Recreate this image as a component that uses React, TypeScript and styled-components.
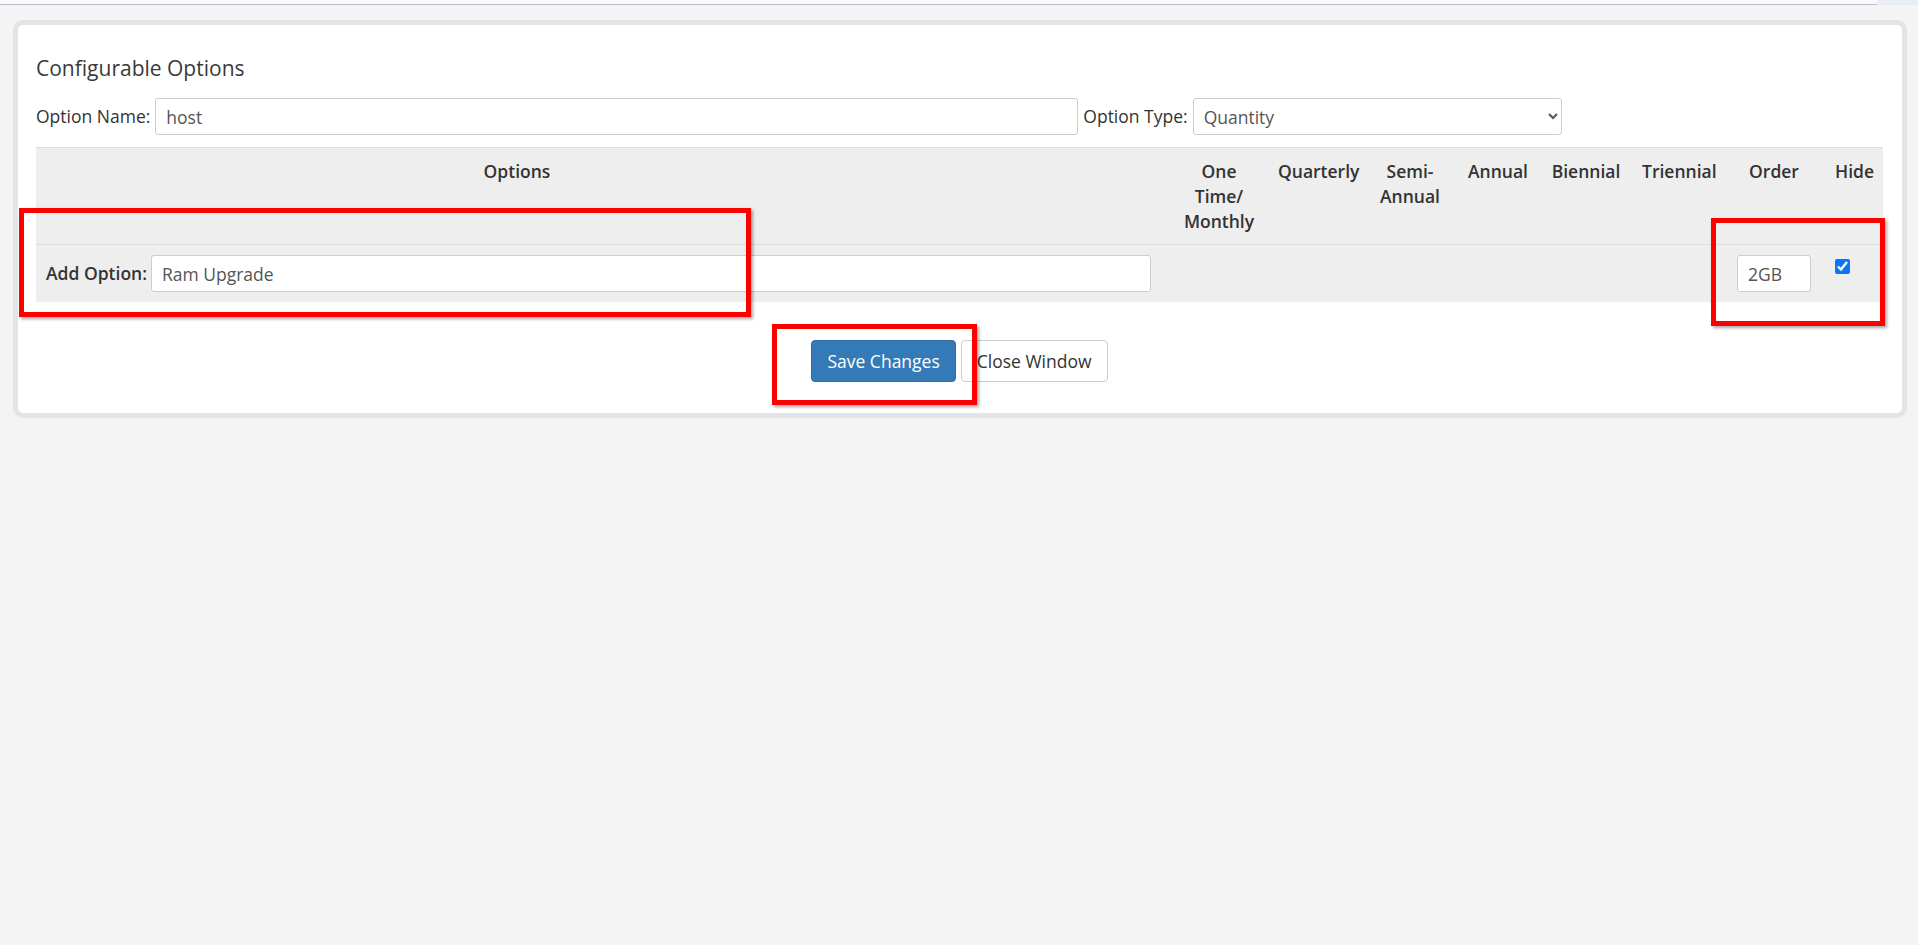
import styled, { createGlobalStyle } from 'styled-components'

const GlobalStyle = createGlobalStyle`
  html, body {
    margin: 0;
    padding: 0;
    background: #f4f4f4;
    font-family: 'Open Sans', 'Liberation Sans', sans-serif;
    font-size: 17.5px;
    line-height: 25px;
    color: #333;
  }
`

const COLS = '962px 172px 98px 96px 92px 84px 92px 91px 102px 58px'

const TopStrip = styled.div`
  display: flex;
  height: 5px;
`
const StripLine = styled.div`
  flex: 0 0 1877px;
  background: #f8f8fa;
  border-bottom: 1px solid #b9bdc8;
  box-sizing: border-box;
`
const StripEnd = styled.div`
  flex: 1;
  background: #e7ecf6;
`

const Page = styled.div`
  position: relative;
  min-height: 940px;
`
const Wrap = styled.div`
  padding: 15px 11px 0 13px;
`
const Panel = styled.div`
  background: #fff;
  border: 5px solid #e1e5e8;
  border-radius: 10px;
  padding: 18px 19px 31px 18px;
`
const Title = styled.h2`
  margin: 11px 0 16px;
  font-size: 21px;
  line-height: 28px;
  font-weight: 400;
  color: #3a3a3a;
`
const FormRow = styled.div`
  display: flex;
  align-items: center;
  gap: 5px;
  height: 37px;
`
const Label = styled.label<{ $bold?: boolean }>`
  white-space: nowrap;
  font-weight: ${p => (p.$bold ? 600 : 400)};
  color: #333;
`
const TextInput = styled.input<{ $w: number }>`
  box-sizing: border-box;
  width: ${p => p.$w}px;
  height: 37px;
  padding: 0 10px;
  border: 1px solid #ccc;
  border-radius: 3px;
  background: #fff;
  font-family: inherit;
  font-size: 17.5px;
  color: #555;
  outline: none;
`
const Select = styled.select`
  box-sizing: border-box;
  width: 369px;
  height: 37px;
  padding: 0 6px;
  border: 1px solid #ccc;
  border-radius: 3px;
  background: #fff;
  font-family: inherit;
  font-size: 17.5px;
  color: #555;
`

const Table = styled.div`
  margin-top: 12px;
  border-top: 1px solid #ddd;
  background: #eee;
`
const Row = styled.div<{ $head?: boolean }>`
  display: grid;
  grid-template-columns: ${COLS};
  border-bottom: ${p => (p.$head ? '1px solid #ddd' : 'none')};
`
const HeadCell = styled.div`
  padding: 11px 10px 10px;
  text-align: center;
  font-weight: 600;
  white-space: nowrap;
  color: #333;
`
const Cell = styled.div<{ $span?: number; $center?: boolean }>`
  grid-column: span ${p => p.$span ?? 1};
  padding: 10px;
  display: flex;
  align-items: ${p => (p.$center ? 'center' : 'flex-start')};
  justify-content: ${p => (p.$center ? 'center' : 'flex-start')};
  gap: 4px;
  min-height: 37px;
`
const AddCell = styled(Cell)`
  align-items: center;
`
const Check = styled.input`
  width: 15px;
  height: 15px;
  margin: 4px 0 0 0;
  accent-color: #0b75f5;
`

const Buttons = styled.div`
  display: flex;
  justify-content: center;
  gap: 5px;
  margin-top: 38px;
`
const Button = styled.button<{ $primary?: boolean }>`
  box-sizing: border-box;
  height: 42px;
  padding: 0 15px;
  border-radius: 4px;
  border: 1px solid ${p => (p.$primary ? '#2e6da4' : '#ccc')};
  background: ${p => (p.$primary ? '#337ab7' : '#fff')};
  color: ${p => (p.$primary ? '#fff' : '#333')};
  font-family: inherit;
  font-size: 17.5px;
  line-height: 25px;
  cursor: pointer;
`

const Marker = styled.div`
  position: absolute;
  box-sizing: border-box;
  border: 5px solid #f00;
  box-shadow: 2px 2px 3px rgba(0, 0, 0, 0.35);
  pointer-events: none;
`

const headers: string[][] = [
  ['Options'],
  [],
  ['One', 'Time/', 'Monthly'],
  ['Quarterly'],
  ['Semi-', 'Annual'],
  ['Annual'],
  ['Biennial'],
  ['Triennial'],
  ['Order'],
  ['Hide'],
]

const markers = [
  { left: 19, top: 208, width: 732, height: 109 },
  { left: 1711, top: 218, width: 174, height: 108 },
  { left: 772, top: 324, width: 205, height: 81 },
]

export default function App() {
  return (
    <Page>
      <GlobalStyle />
      <TopStrip>
        <StripLine />
        <StripEnd />
      </TopStrip>
      <Wrap>
        <Panel>
          <Title>Configurable Options</Title>
          <FormRow>
            <Label>Option Name:</Label>
            <TextInput $w={923} defaultValue='host' />
            <Label>Option Type:</Label>
            <Select defaultValue='Quantity'>
              <option>Dropdown</option>
              <option>Radio</option>
              <option>Yes/No</option>
              <option>Quantity</option>
            </Select>
          </FormRow>
          <Table>
            <Row $head>
              {headers.map((lines, i) => (
                <HeadCell key={i}>
                  {lines.map((l, j) => (
                    <div key={j}>{l}</div>
                  ))}
                </HeadCell>
              ))}
            </Row>
            <Row>
              <AddCell $span={2}>
                <Label $bold>Add Option:</Label>
                <TextInput $w={1000} defaultValue='Ram Upgrade' />
              </AddCell>
              <Cell />
              <Cell />
              <Cell />
              <Cell />
              <Cell />
              <Cell />
              <Cell $center>
                <TextInput $w={74} defaultValue='2GB' />
              </Cell>
              <Cell>
                <Check type='checkbox' defaultChecked />
              </Cell>
            </Row>
          </Table>
          <Buttons>
            <Button $primary>Save Changes</Button>
            <Button>Close Window</Button>
          </Buttons>
        </Panel>
      </Wrap>
      {markers.map((m, i) => (
        <Marker key={i} style={{ left: m.left, top: m.top, width: m.width, height: m.height }} />
      ))}
    </Page>
  )
}
